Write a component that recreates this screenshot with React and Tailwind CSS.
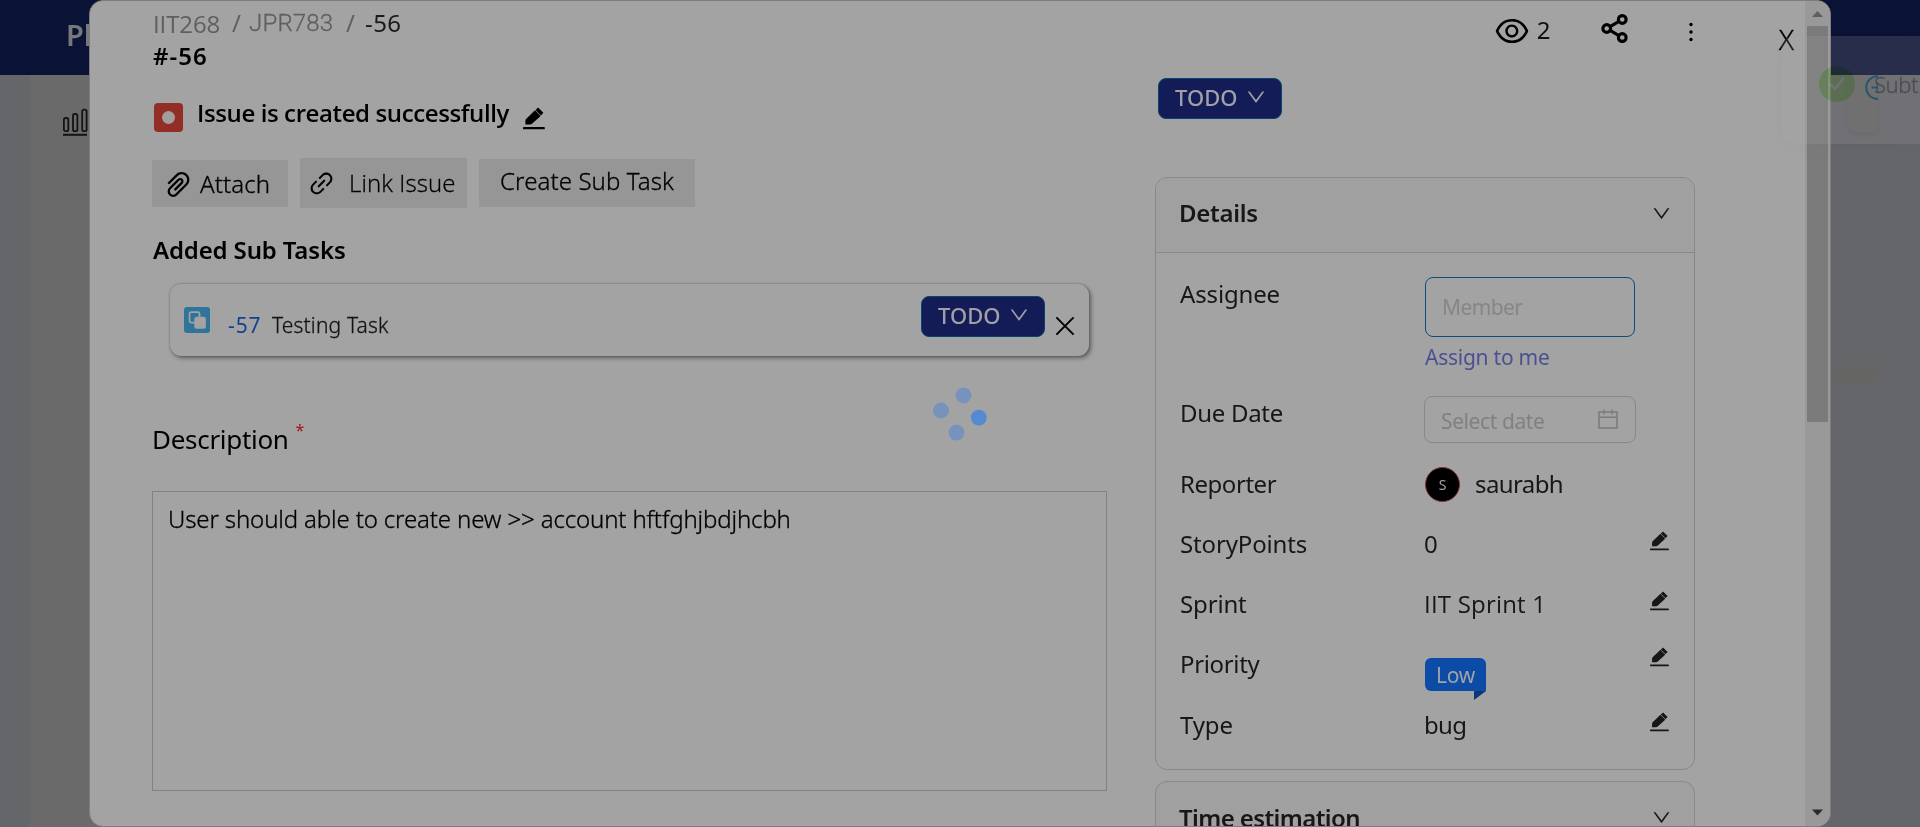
import React from "react";
import { AiOutlineDown, AiOutlineEye, AiOutlineLink, AiOutlinePaperClip } from "react-icons/ai";
import { Share2 } from "lucide-react";

function EditIcon({ className }) {
  return (
    <svg viewBox="0 0 22 23" className={className} fill="currentColor">
      <path d="M15.1 0.4 L20.4 5.7 L17.9 8.4 L12.5 2.9 Z" />
      <path d="M12 3.2 L17.6 8.9 L9 16.8 Q8.2 17.6 7 17.6 H2.4 V13.6 Q2.4 12.6 3.1 11.9 Z" />
      <rect x="0" y="20.1" width="21.8" height="2.2" rx="0.6" />
    </svg>
  );
}

function StatusButton({ className }) {
  return (
    <div className={`flex h-[41px] w-[124px] shrink-0 rounded-lg border border-[#06466d] bg-[#131c57] pl-[16px] text-[#a0a0a6] ${className}`}>
      <span className="w-[70px] pt-[2px] text-[22px] font-medium leading-8">TODO</span>
      <AiOutlineDown className="mt-[7px] size-[22px]" />
    </div>
  );
}

function Row({ label, className, children }) {
  return (
    <div className={`flex items-start ${className}`}>
      <div className="w-[244px] shrink-0 pt-px leading-8 tracking-[-0.15px]">{label}</div>
      {children}
    </div>
  );
}

function Backdrop() {
  return (
    <div className="flex h-full flex-col">
      <header className="h-[75px] shrink-0 bg-[#0a1236] pl-[66px] pt-[15px] text-[29px] font-semibold leading-10 text-[#77787c]">
        Pl
      </header>
      <div className="flex grow">
        <div className="w-[30px] bg-[#65666a]" />
        <div className="w-[70px] bg-[#6a6a6a] pl-[32px] pt-[32px]">
          <svg viewBox="0 0 26 30" className="h-[30px] w-[26px]" fill="none" stroke="#141414" strokeWidth="1.8">
            <rect x="1.9" y="11" width="4.4" height="13.2" rx="1.8" />
            <rect x="11" y="7" width="4.4" height="17.2" rx="1.8" />
            <rect x="20.2" y="2.6" width="4.4" height="21.6" rx="1.8" />
            <path d="M1 27.8 H25" strokeWidth="2" />
          </svg>
        </div>
        <div className="flex grow flex-col items-start bg-[#65666a] pl-[1731px]">
          <div className="ml-[16px] h-[57px] w-[31px] overflow-hidden rounded-bl-[12px] bg-[#646464] pl-[17px] shadow-[0_3px_6px_rgba(0,0,0,0.08)]">
            <svg viewBox="0 0 28 28" className="h-[28px] w-[28px]" fill="none" stroke="#0b4560" strokeWidth="2">
              <circle cx="13.6" cy="12.6" r="11.4" />
              <path d="M7.5 12.6 H19 M13.6 7 V18" />
            </svg>
          </div>
          <div className="mt-[234px] h-[17px] w-[48px] bg-[#656564]" />
        </div>
      </div>
    </div>
  );
}

function LeftColumn() {
  return (
    <div className="w-[955px] shrink-0 pt-[6px] text-black">
      <div className="flex h-[33px] pl-px leading-8 text-[#5f5f5f]">
        <span className="w-[79px] pt-[1px] font-['Open_Sans'] tracking-[-0.1px]">IIT268</span>
        <span className="w-[17px]">/</span>
        <span className="w-[97px] font-[Roboto] font-light tracking-[0.2px] [-webkit-text-stroke:0.3px]">JPR783</span>
        <span className="w-[19px]">/</span>
        <span className="tracking-[0.4px] text-[#1a1a1a]">-56</span>
      </div>
      <div className="pl-px font-semibold leading-8 tracking-[1px]">#-56</div>

      <div className="mt-[25px] flex h-8 items-start">
        <div className="ml-[2px] mt-[6px] flex size-[29px] items-center justify-center rounded-[4px] bg-[#932e26]">
          <div className="size-[13px] rounded-full bg-[#a39d9c]" />
        </div>
        <span className="ml-[14px] w-[326px] whitespace-nowrap font-['Open_Sans'] font-semibold leading-8 tracking-[-0.39px]">
          Issue is created successfully
        </span>
        <EditIcon className="mt-[10px] h-[23px] w-[22px]" />
      </div>

      <div className="mt-[29px] flex h-[50px] items-start whitespace-nowrap font-light leading-8 [-webkit-text-stroke:0.3px]">
        <div className="mt-[2px] flex h-[47px] w-[136px] bg-[#969696] pl-[10px]">
          <AiOutlinePaperClip className="mt-[8px] size-[33px]" />
          <span className="ml-[5px] mt-[8px] tracking-[0.1px]">Attach</span>
        </div>
        <div className="ml-[12px] flex h-[50px] w-[167px] bg-[#969696] pl-[7px]">
          <AiOutlineLink className="mt-[11px] size-[29px]" />
          <span className="ml-[13px] mt-[9px] font-['Open_Sans'] tracking-[0.1px]">Link Issue</span>
        </div>
        <div className="ml-[12px] mt-[1px] h-[48px] w-[216px] bg-[#969696] pl-[21px] pt-[6px] tracking-[0.1px]">
          Create Sub Task
        </div>
      </div>

      <div className="mt-[26px] pl-px font-semibold leading-8 tracking-[-0.15px]">Added Sub Tasks</div>

      <div className="ml-[18px] mt-[18px] flex h-[72px] w-[919px] items-start rounded-[11px] pl-[14px] shadow-[2px_2px_4px_rgba(0,0,0,0.42),0_0_2px_rgba(0,0,0,0.3)]">
        <svg viewBox="0 0 26 26" className="mt-[23px] size-[26px]">
          <rect width="26" height="26" rx="3" fill="#2e749b" />
          <rect x="5.5" y="5.2" width="10" height="10.4" rx="1.6" fill="none" stroke="#a3a3a3" strokeWidth="1.7" />
          <rect x="10.3" y="9.8" width="11.6" height="12" rx="2.4" fill="#a3a3a3" />
        </svg>
        <span className="ml-[18px] mt-[25px] w-[44px] text-[21px] leading-8 tracking-[0.9px] text-[#134192]">-57</span>
        <span className="mt-[25px] w-[649px] text-[21px] font-light leading-8 tracking-[0.15px] text-[#141414] [-webkit-text-stroke:0.3px]">Testing Task</span>
        <StatusButton className="mt-[12px]" />
        <svg viewBox="0 0 20 20" className="ml-[10px] mt-[32px] size-[20px]" stroke="#000" strokeWidth="2">
          <path d="M1.4 1.4 L18.6 18.6 M18.6 1.4 L1.4 18.6" />
        </svg>
      </div>

      <div className="mt-[67px] flex h-8 text-[26px] leading-8 tracking-[-0.3px]">
        Description
        <span className="ml-[7px] -mt-[9px] text-[16px] text-[#a80f14]">*</span>
      </div>

      <div className="mt-[36px] h-[300px] whitespace-nowrap border border-[#828282] pl-[15px] pt-[11px] font-light leading-8 tracking-[-0.14px] [-webkit-text-stroke:0.3px]">
        User should able to create new &gt;&gt; account hftfghjbdjhcbh
      </div>
    </div>
  );
}

function RightColumn() {
  return (
    <div className="ml-[48px] flex w-[540px] shrink-0 flex-col text-[#171717]">
      <div className="ml-[3px] flex pt-[77px]">
        <StatusButton />
      </div>

      <div className="mt-[58px] h-[593px] shrink-0 rounded-[12px] border border-[#888888]">
        <div className="flex h-[75px] items-start justify-between rounded-t-[11px] border-b border-[#888888] bg-[#a0a0a0] pl-[23px] pr-[22px]">
          <span className="mt-[19px] font-semibold leading-8 tracking-[-0.3px]">Details</span>
          <AiOutlineDown className="mt-[25px] size-[21px]" />
        </div>
        <div className="pl-[24px] pt-[24px]">
          <Row label="Assignee" className="h-[119px]">
            <div className="ml-px">
              <div className="h-[60px] w-[210px] rounded-[8px] border border-[#0b4e79] pl-[16px] pt-[13px] text-[21px] leading-8 tracking-[-0.6px] text-[#868686]">
                Member
              </div>
              <div className="mt-[4px] text-[21px] leading-8 tracking-[-0.25px] text-[#4a5092]">Assign to me</div>
            </div>
          </Row>
          <Row label={<span className="tracking-[-0.3px]">Due Date</span>} className="h-[71px]">
            <div className="flex h-[47px] w-[212px] items-start rounded-[8px] border border-[#888888] pl-[16px] pt-[8px] text-[21px] leading-8 tracking-[-0.4px] text-[#808080]">
              <span className="w-[157px]">Select date</span>
              <svg viewBox="0 0 20 20" className="mt-[4px] size-[20px]" fill="none" stroke="#7b7b7b" strokeWidth="1.5">
                <path d="M1 3 H19 V19 H1 Z M1 8.2 H19 M6 0.4 V5.2 M14 0.4 V5.2" />
              </svg>
            </div>
          </Row>
          <Row label={<span className="tracking-[-0.45px]">Reporter</span>} className="h-[60px]">
            <div className="ml-[1px] flex size-[35px] items-center justify-center rounded-full border border-[#7a3538] bg-black text-[14px] leading-none text-[#a3a3a3]">
              S
            </div>
            <span className="ml-[15px] pt-px leading-8 tracking-[-0.6px]">saurabh</span>
          </Row>
          <Row label="StoryPoints" className="h-[60px]">
            <span className="w-[226px] pt-px leading-8">0</span>
            <EditIcon className="mt-[4px] h-[20px] w-[19px]" />
          </Row>
          <Row label="Sprint" className="h-[60px]">
            <span className="w-[226px] pt-px font-['Open_Sans'] leading-8 tracking-[0.2px]">IIT Sprint 1</span>
            <EditIcon className="mt-[4px] h-[20px] w-[19px]" />
          </Row>
          <Row label={<span className="tracking-[-0.35px]">Priority</span>} className="h-[61px]">
            <div className="w-[226px] pl-px pt-[11px]">
              <div className="h-[33px] w-[61px] rounded-[6px] rounded-br-none bg-[#0d4ca6] pl-[11px] pt-px text-[21px] leading-8 tracking-[-0.3px] text-[#a0a3a8]">
                Low
              </div>
              <svg viewBox="0 0 12 9" className="ml-[49px] h-[9px] w-[12px]">
                <path d="M0 0 H12 L0 9 Z" fill="#0a377a" />
              </svg>
            </div>
            <EditIcon className="h-[20px] w-[19px]" />
          </Row>
          <Row label="Type">
            <span className="w-[226px] pt-px leading-8 tracking-[-0.7px]">bug</span>
            <EditIcon className="mt-[4px] h-[20px] w-[19px]" />
          </Row>
        </div>
      </div>

      <div className="mt-[11px] flex h-[75px] shrink-0 items-start justify-between rounded-t-[12px] border border-[#888888] bg-[#a0a0a0] pl-[23px] pr-[22px]">
        <span className="mt-[20px] font-semibold leading-8 tracking-[-0.6px]">Time estimation</span>
        <AiOutlineDown className="mt-[25px] size-[21px]" />
      </div>
    </div>
  );
}

function Scrollbar() {
  return (
    <div className="flex h-full w-[25px] shrink-0 flex-col bg-[#999999] pl-[2px]">
      <svg viewBox="0 0 21 25" className="h-[25px] w-[21px]">
        <path d="M5 16 L10.5 10 L16 16 Z" fill="#5f5f5f" />
      </svg>
      <div className="h-[396px] w-[21px] bg-[#7b7b7b]" />
      <svg viewBox="0 0 21 25" className="mt-auto h-[25px] w-[21px]">
        <path d="M5 8.5 L10.5 14.5 L16 8.5 Z" fill="#2b2b2b" />
      </svg>
    </div>
  );
}

function Toast() {
  return (
    <div className="absolute right-0 top-[36px] flex h-[108px] w-[139px] items-start overflow-hidden rounded-l-[14px] bg-[#a3a3a3]/19 pl-[38px] pt-[30px] shadow-[0_6px_20px_rgba(0,0,0,0.02)]">
      <div className="flex size-[36px] shrink-0 items-center justify-center rounded-full bg-[#cdf8b6] mix-blend-multiply">
        <svg viewBox="0 0 16 14" className="h-[14px] w-[16px]" fill="none" stroke="#fff" strokeWidth="2.4">
          <path d="M1 7 L6 12 L15 1" />
        </svg>
      </div>
      <span className="ml-[19px] mt-[2px] text-[22px] font-light leading-8 tracking-[-0.4px] text-[#4c4d50] [-webkit-text-stroke:0.3px]">Subt</span>
    </div>
  );
}

function Spinner() {
  return (
    <svg viewBox="0 0 56 56" className="absolute left-[932px] top-[386px] size-[56px]" fill="#7793bd">
      <circle cx="31.5" cy="9.3" r="7.9" />
      <circle cx="9" cy="24.5" r="7.9" />
      <circle cx="24.5" cy="46.7" r="7.9" />
      <circle cx="46.8" cy="31.6" r="7.9" fill="#568ad0" />
    </svg>
  );
}

export default function App() {
  return (
    <div className="relative h-[827px] w-[1920px] overflow-hidden bg-[#65666a] font-['Noto_Sans',sans-serif] text-[24px]">
      <Backdrop />
      <div className="absolute left-[89px] top-0 flex h-[827px] w-[1742px] overflow-hidden rounded-[14px] border border-[#7d7d7d] bg-[#a3a3a3] pl-[62px]">
        <LeftColumn />
        <RightColumn />
        <div className="grow" />
        <Scrollbar />
        <div className="absolute right-[36px] top-0 flex items-start text-black">
          <AiOutlineEye className="mt-[11px] size-[38px]" />
          <span className="ml-[6px] mt-[13px] w-[62px] leading-8 text-[#111]">2</span>
          <Share2 className="mt-[12px] size-[31px]" strokeWidth={2.4} />
          <svg viewBox="0 0 4 20" className="ml-[59px] mt-[21px] h-[20px] w-[4px]">
            <circle cx="2" cy="2.5" r="1.7" />
            <circle cx="2" cy="10" r="1.7" />
            <circle cx="2" cy="17.5" r="1.7" />
          </svg>
          <span className="ml-[86px] mt-[22px] text-[28px] font-light leading-8 [-webkit-text-stroke:0.3px]">X</span>
        </div>
      </div>
      <Spinner />
      <Toast />
    </div>
  );
}
